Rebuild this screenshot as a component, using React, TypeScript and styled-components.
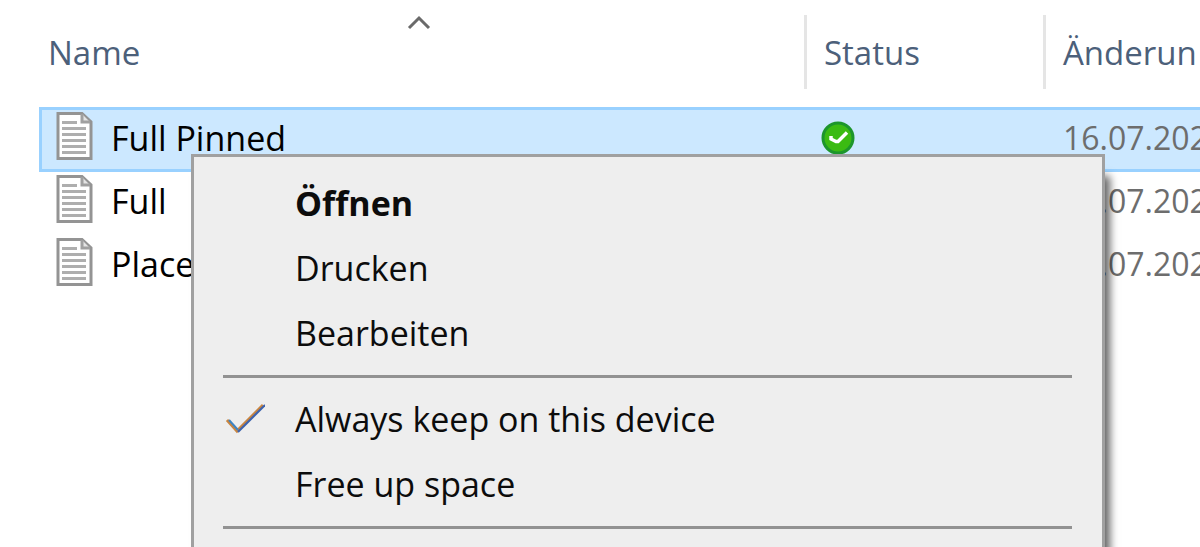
import React from "react";
import styled, { createGlobalStyle } from "styled-components";

const GlobalStyle = createGlobalStyle`
  * { box-sizing: border-box; }
  body {
    margin: 0;
    background: #fff;
    font-family: "Open Sans", "Noto Sans", sans-serif;
  }
`;

const Explorer = styled.main`
  position: relative;
  height: 100vh;
  overflow: hidden;
  padding-left: 39px;
`;

const FileTable = styled.table`
  display: block;
  font-size: 34px;
  line-height: 40px;
`;

const HeaderGroup = styled.thead`
  display: block;
  padding: 15px 0 18px;
`;

const FileGroup = styled.tbody`
  display: block;
`;

const HeaderRow = styled.tr`
  display: grid;
  grid-template-columns: minmax(0, 1fr) 239px 157px;
  height: 74px;
`;

const HeaderCell = styled.th<{ $divided?: boolean }>`
  position: relative;
  display: flex;
  align-items: center;
  padding: 2px 0 0 ${(p) => (p.$divided ? "17px" : "9px")};
  border-left: ${(p) => (p.$divided ? "3px solid #e5e5e5" : "0")};
  color: #4c607a;
  font-size: 33px;
  font-weight: 400;
  white-space: nowrap;
`;

const SortArrow = styled.svg`
  position: absolute;
  top: 0;
  left: calc(50% - 16px);
  width: 26px;
  height: 15px;
`;

const FileRow = styled.tr<{ $selected?: boolean }>`
  display: grid;
  grid-template-columns: minmax(0, 1fr) 239px 157px;
  height: 65px;
  margin-bottom: -2px;
  border: 3px solid ${(p) => (p.$selected ? "#99d1ff" : "transparent")};
  border-right: 0;
  background: ${(p) => (p.$selected ? "#cce8ff" : "transparent")};
`;

const FileCell = styled.td`
  display: flex;
  align-items: center;
  gap: 18px;
  padding: 0 0 3px 14px;
  color: #000;
  white-space: nowrap;
`;

const StatusCell = styled(FileCell)`
  padding-left: 17px;
`;

const DateCell = styled(FileCell)`
  padding-left: 20px;
  color: #6d6d6d;
  font-size: 32px;
`;

const DocumentIcon = styled.svg`
  flex: none;
  width: 37px;
  height: 48px;
  margin-bottom: 4px;
`;

const StatusIcon = styled.svg`
  width: 34px;
  height: 34px;
`;

const Menu = styled.div`
  position: absolute;
  top: 154px;
  left: 191px;
  width: 914px;
  padding: 13px 30px 13px 29px;
  border: 3px solid #a0a0a0;
  background: #eee;
  box-shadow: 7px 20px 8px -2px rgba(0, 0, 0, 0.6);
`;

const MenuItem = styled.button<{ $primary?: boolean }>`
  display: grid;
  grid-template-columns: 72px 1fr;
  align-items: center;
  width: 100%;
  height: 65px;
  padding: 0;
  border: 0;
  background: none;
  color: #0c0c0c;
  font-family: inherit;
  font-size: 34px;
  line-height: 40px;
  font-weight: ${(p) => (p.$primary ? 700 : 400)};
  text-align: left;
`;

const Label = styled.span`
  grid-column: 2;
  white-space: nowrap;
`;

const Separator = styled.hr`
  height: 3px;
  margin: 10px 0 8px;
  border: 0;
  background: #929292;
`;

const CheckMark = styled.svg`
  width: 42px;
  height: 32px;
`;

const TextFile = () => (
  <DocumentIcon viewBox="0 0 37 48" aria-hidden="true">
    <path d="M2 1.5H26L35 10V46.500H2Z" fill="#fff" stroke="#949494" strokeWidth="3" />
    <path d="M26 2V10H34" fill="#e4e4e4" stroke="#a0a0a0" strokeWidth="3" />
    <path d="M6 10.500H21M6 16.500H30M6 22.500H30M6 28.500H30M6 34.500H30M6 40.500H30" stroke="#aeaeae" strokeWidth="3" />
  </DocumentIcon>
);

const files = [
  { name: "Full Pinned", selected: true },
  { name: "Full", selected: false },
  { name: "Place", selected: false },
];

export default function App() {
  return (
    <Explorer>
      <GlobalStyle />
      <FileTable>
        <HeaderGroup>
          <HeaderRow>
            <HeaderCell scope="col">
              Name
              <SortArrow viewBox="0 0 26 15" aria-hidden="true">
                <path d="M3 13L13 3L23 13" fill="none" stroke="#6a6a6a" strokeWidth="3" />
              </SortArrow>
            </HeaderCell>
            <HeaderCell scope="col" $divided>Status</HeaderCell>
            <HeaderCell scope="col" $divided>Änderun</HeaderCell>
          </HeaderRow>
        </HeaderGroup>
        <FileGroup>
          {files.map((file) => (
            <FileRow key={file.name} $selected={file.selected}>
              <FileCell>
                <TextFile />
                {file.name}
              </FileCell>
              <StatusCell>
                {file.selected && (
                  <StatusIcon viewBox="0 0 34 34" role="img" aria-label="Available">
                    <circle cx="17" cy="17" r="15" fill="#3bbb12" stroke="#1d962c" strokeWidth="3" />
                    <path d="M10 15V18L15 20.500L17 20.500L26 11.500" fill="none" stroke="#fff" strokeWidth="3.500" />
                  </StatusIcon>
                )}
              </StatusCell>
              <DateCell>16.07.202</DateCell>
            </FileRow>
          ))}
        </FileGroup>
      </FileTable>
      <Menu>
        <MenuItem $primary><Label>Öffnen</Label></MenuItem>
        <MenuItem><Label>Drucken</Label></MenuItem>
        <MenuItem><Label>Bearbeiten</Label></MenuItem>
        <Separator />
        <MenuItem>
          <CheckMark viewBox="0 0 42 32" fill="none" strokeWidth="3" aria-hidden="true">
            <path d="M4 17L14 28L40 2" stroke="#c98540" />
            <path d="M6 17L15 27" stroke="#3c84c4" strokeWidth="2" />
            <path d="M15 29L42 2" stroke="#3c62ae" strokeWidth="2" />
          </CheckMark>
          <Label>Always keep on this device</Label>
        </MenuItem>
        <MenuItem><Label>Free up space</Label></MenuItem>
        <Separator />
      </Menu>
    </Explorer>
  );
}
